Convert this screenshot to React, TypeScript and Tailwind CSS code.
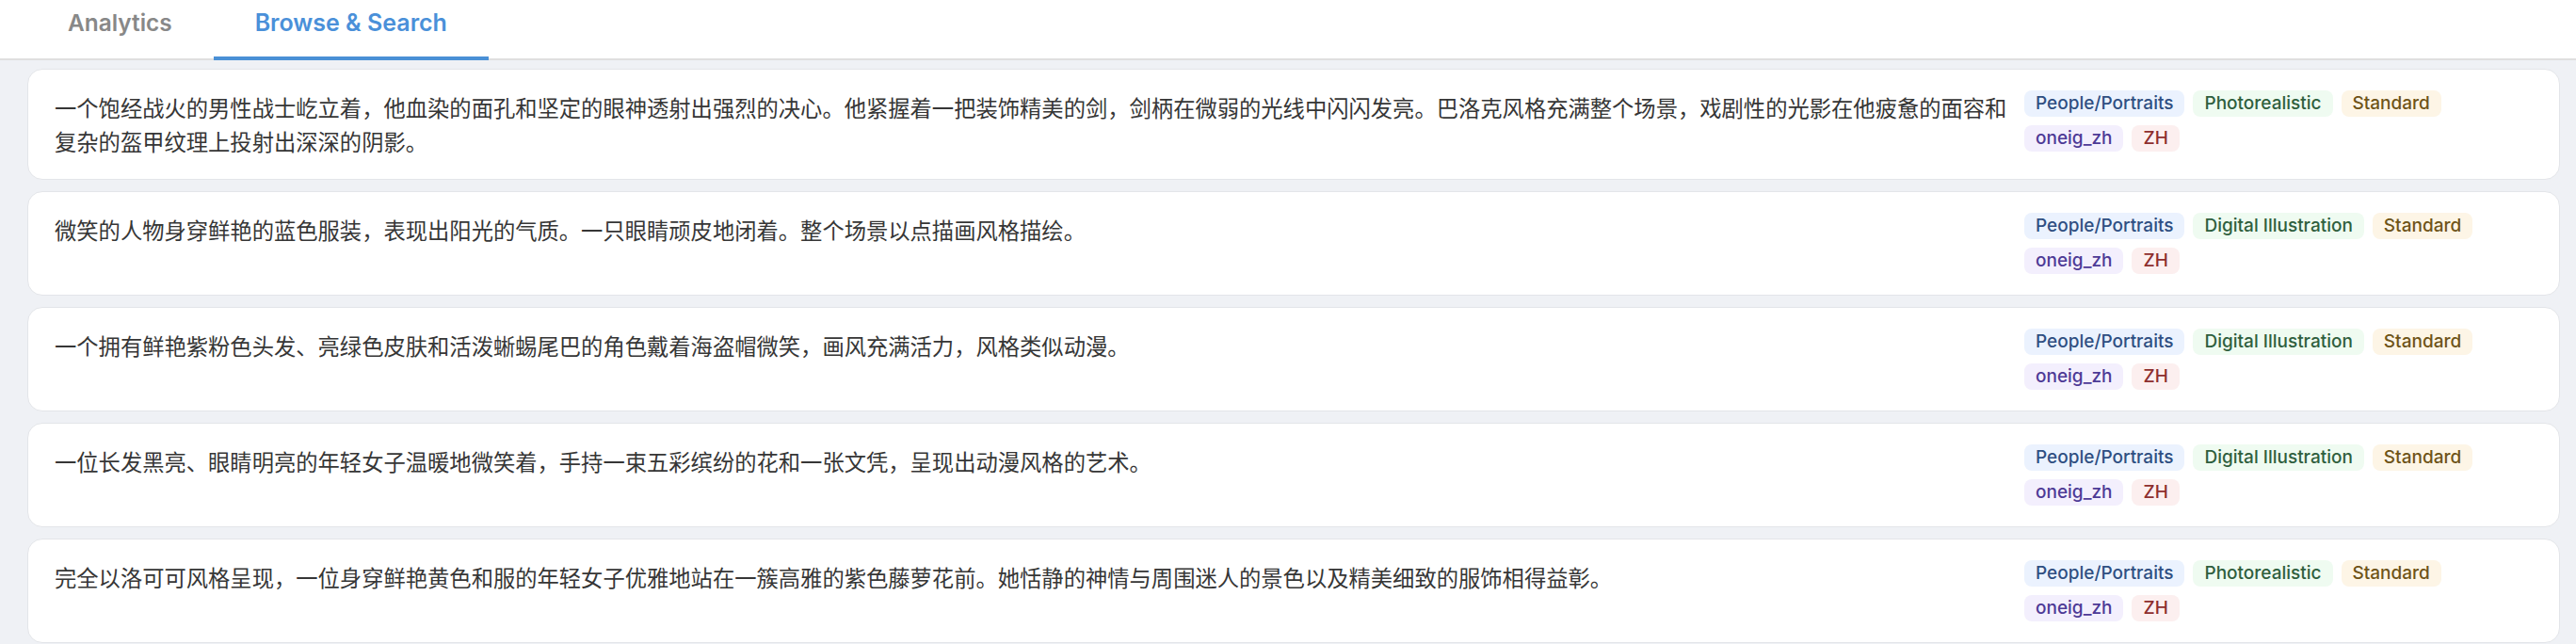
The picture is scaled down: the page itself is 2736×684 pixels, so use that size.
import React from "react";

type Tag = { label: string; kind: "cat" | "style" | "cx" | "src" | "lang" };

const tagClass: Record<Tag["kind"], string> = {
  cat: "bg-[#ebf2fe] text-[#2f4f82]",
  style: "bg-[#effbf1] text-[#2f5f3e]",
  cx: "bg-[#fdf5e6] text-[#6f5418]",
  src: "bg-[#f3effd] text-[#4d3a96]",
  lang: "bg-[#fcefef] text-[#8e2e2e]",
};

const items: { text: string; style: string }[] = [
  {
    text: "一个饱经战火的男性战士屹立着，他血染的面孔和坚定的眼神透射出强烈的决心。他紧握着一把装饰精美的剑，剑柄在微弱的光线中闪闪发亮。巴洛克风格充满整个场景，戏剧性的光影在他疲惫的面容和复杂的盔甲纹理上投射出深深的阴影。",
    style: "Photorealistic",
  },
  {
    text: "微笑的人物身穿鲜艳的蓝色服装，表现出阳光的气质。一只眼睛顽皮地闭着。整个场景以点描画风格描绘。",
    style: "Digital Illustration",
  },
  {
    text: "一个拥有鲜艳紫粉色头发、亮绿色皮肤和活泼蜥蜴尾巴的角色戴着海盗帽微笑，画风充满活力，风格类似动漫。",
    style: "Digital Illustration",
  },
  {
    text: "一位长发黑亮、眼睛明亮的年轻女子温暖地微笑着，手持一束五彩缤纷的花和一张文凭，呈现出动漫风格的艺术。",
    style: "Digital Illustration",
  },
  {
    text: "完全以洛可可风格呈现，一位身穿鲜艳黄色和服的年轻女子优雅地站在一簇高雅的紫色藤萝花前。她恬静的神情与周围迷人的景色以及精美细致的服饰相得益彰。",
    style: "Photorealistic",
  },
];

function Pill({ t }: { t: Tag }) {
  return (
    <span
      className={`flex h-[28px] items-center rounded-[8px] px-[12px] text-[19px] font-medium leading-[28px] ${tagClass[t.kind]}`}
      style={{ fontFamily: "Inter, sans-serif" }}
    >
      {t.label}
    </span>
  );
}

function Card({ text, style }: { text: string; style: string }) {
  const row1: Tag[] = [
    { label: "People/Portraits", kind: "cat" },
    { label: style, kind: "style" },
    { label: "Standard", kind: "cx" },
  ];
  const row2: Tag[] = [
    { label: "oneig_zh", kind: "src" },
    { label: "ZH", kind: "lang" },
  ];
  return (
    <div className="flex gap-[12px] rounded-[16px] border border-[#e3e5e9] bg-white px-[28px] py-[22px]">
      <p
        className="min-w-0 flex-1 text-[23.3px] leading-[36px] text-[#363636]"
        style={{ fontFamily: '"Noto Sans CJK SC", "Noto Sans", sans-serif' }}
      >
        {text}
      </p>
      <div className="flex w-[540px] shrink-0 flex-col gap-[9px]">
        <div className="flex gap-[9px]">
          {row1.map((t) => (
            <Pill key={t.label} t={t} />
          ))}
        </div>
        <div className="flex gap-[9px]">
          {row2.map((t) => (
            <Pill key={t.label} t={t} />
          ))}
        </div>
      </div>
    </div>
  );
}

export default function App() {
  return (
    <div className="min-h-[684px] bg-[#eff1f5]" style={{ fontFamily: "Inter, sans-serif" }}>
      <nav className="flex border-b-2 border-[#dfdfdf] bg-white pl-[28px]">
        <button className="-mb-[2px] border-b-4 border-transparent px-[44px] pt-[6px] pb-[18px] text-[24.4px] font-semibold leading-[36px] text-[#888888]">
          Analytics
        </button>
        <button className="-mb-[2px] border-b-4 border-[#4a90d6] px-[44px] pt-[6px] pb-[18px] text-[25px] font-semibold leading-[36px] text-[#4a90d9]">
          Browse &amp; Search
        </button>
      </nav>
      <main className="flex flex-col gap-[12px] pt-[9px] pl-[29px] pr-[17px]">
        {items.map((it, i) => (
          <Card key={i} text={it.text} style={it.style} />
        ))}
      </main>
    </div>
  );
}
